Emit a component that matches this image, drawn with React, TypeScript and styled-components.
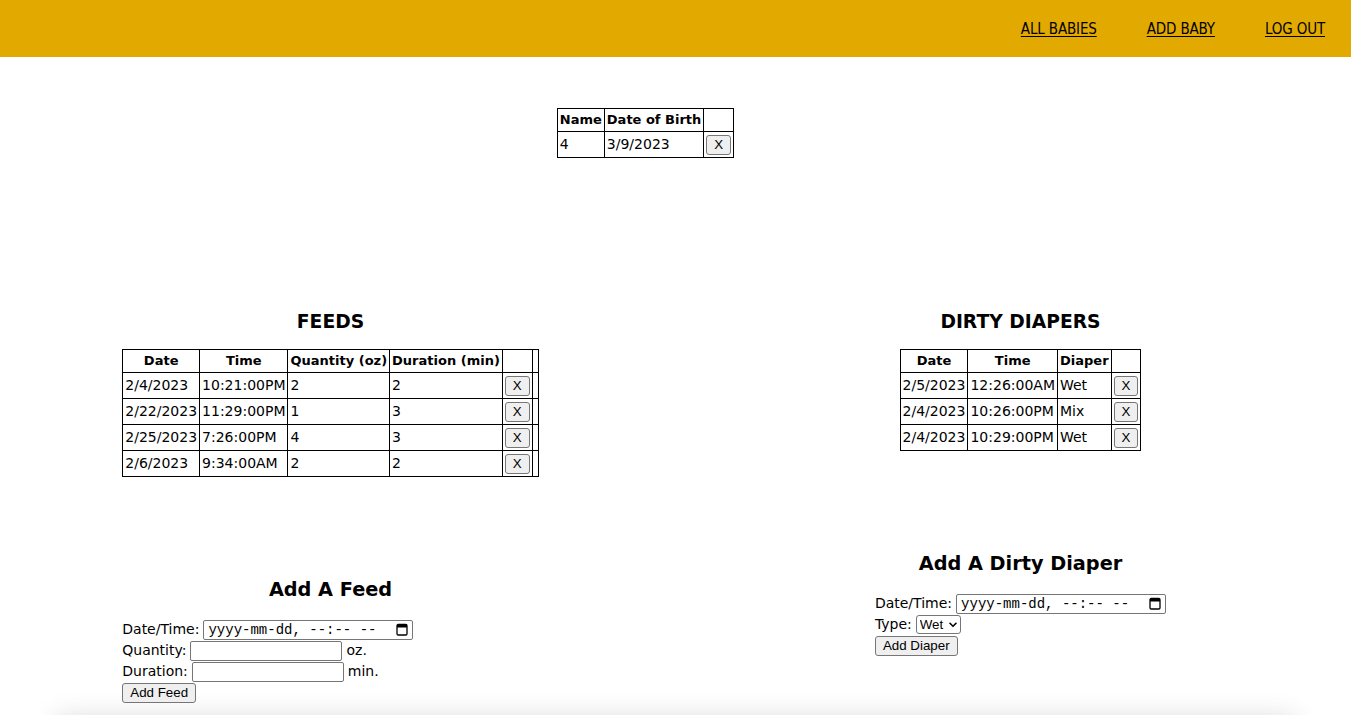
import React from "react";
import styled, { createGlobalStyle } from "styled-components";

const GlobalStyle = createGlobalStyle`
  html, body {
    margin: 0;
    padding: 0;
    overflow: hidden;
    background: #ffffff;
  }
  body {
    font-family: "DejaVu Sans", "Noto Sans", sans-serif;
    color: #000;
  }
`;

const Header = styled.header`
  height: 57px;
  background: #e2a900;
  display: flex;
  justify-content: flex-end;
  align-items: center;
  gap: 50px;
  padding-right: 26px;
`;

const NavLink = styled.a`
  font-family: "Liberation Sans Narrow", "DejaVu Sans Condensed", "Liberation Sans", sans-serif;
  font-size: 15px;
  letter-spacing: -0.15px;
  color: #000;
  text-decoration: underline;
  text-underline-offset: 2px;
  cursor: pointer;
`;

const BabyWrap = styled.div`
  display: flex;
  justify-content: center;
  padding-right: 60px;
  margin-top: 51px;
`;

const Table = styled.table`
  border-collapse: collapse;
  border: 1px solid #000;
  margin: 0 auto;
`;

const Th = styled.th<{ $spacer?: boolean }>`
  border: 1px solid #000;
  padding: 2px;
  width: ${(p) => (p.$spacer ? "1px" : "auto")};
  font: bold 13px/18px "DejaVu Sans", sans-serif;
  text-align: center;
  white-space: nowrap;
`;

const Td = styled.td<{ $spacer?: boolean }>`
  border: 1px solid #000;
  padding: 2px;
  width: ${(p) => (p.$spacer ? "1px" : "auto")};
  font: 14px/17px "DejaVu Sans", sans-serif;
  text-align: left;
  vertical-align: middle;
  white-space: nowrap;
`;

const BodyRow = styled.tr`
  height: 26px;
`;

const Button = styled.button`
  font: 13.33px/18px "Liberation Sans", Arial, sans-serif;
  height: 20px;
  padding: 0 7px;
  margin: 0;
  background: #efefef;
  border: 1px solid #767676;
  border-radius: 3px;
  color: #000;
  display: inline-flex;
  align-items: center;
  justify-content: center;
  box-sizing: border-box;
`;

const Columns = styled.main`
  display: grid;
  grid-template-columns: repeat(2, 690px);
  justify-content: center;
  align-items: start;
  margin-top: 153px;
`;

const Column = styled.section`
  justify-self: center;
  display: flex;
  flex-direction: column;
`;

const SectionTitle = styled.h3`
  font: bold 18.72px/22px "DejaVu Sans", sans-serif;
  text-align: center;
  margin: 0 0 16px;
`;

const FormBlock = styled.form`
  margin-top: 102px;
  display: flex;
  flex-direction: column;
  align-items: flex-start;
`;

const FormTitle = styled.h3`
  align-self: stretch;
  font: bold 19.3px/22px "DejaVu Sans", sans-serif;
  text-align: center;
  margin: 0 0 18px;
`;

const Field = styled.div`
  display: flex;
  align-items: center;
  gap: 4px;
  height: 21px;
  font: 14px/17px "DejaVu Sans", sans-serif;
`;

const DateBox = styled.span`
  display: inline-flex;
  align-items: center;
  justify-content: space-between;
  width: 210px;
  height: 20px;
  box-sizing: border-box;
  border: 1px solid #767676;
  border-radius: 2px;
  padding: 0 4px;
  font: 14px "Liberation Mono", monospace;
  color: #000;
`;

const TextInput = styled.input`
  width: 152px;
  height: 20px;
  box-sizing: border-box;
  border: 1px solid #767676;
  border-radius: 2px;
  padding: 1px 2px;
  margin: 0;
  font: 13.33px "Liberation Sans", Arial, sans-serif;
`;

const SelectBox = styled.span`
  display: inline-flex;
  align-items: center;
  height: 19px;
  box-sizing: border-box;
  border: 1px solid #767676;
  border-radius: 3px;
  padding: 0 3px;
  gap: 1px;
`;

const Select = styled.select`
  appearance: none;
  -webkit-appearance: none;
  border: none;
  background: transparent;
  font: 13.33px "Liberation Sans", Arial, sans-serif;
  padding: 0;
  margin: 0;
  color: #000;
  outline: none;
`;

const Footer = styled.footer`
  width: calc(100% - 110px);
  height: 60px;
  margin: 13px auto 0;
  background: #fff;
  box-shadow: 0 0 26px rgba(0, 0, 0, 0.13);
`;

const CalendarIcon = () => (
  <svg width="12" height="13" viewBox="0 0 12 13" aria-hidden="true">
    <rect x="1" y="1.5" width="10" height="10.5" rx="1.2" fill="none" stroke="#000" strokeWidth="1.3" />
    <rect x="1" y="1.5" width="10" height="3" fill="#000" />
  </svg>
);

const Chevron = () => (
  <svg width="8" height="6" viewBox="0 0 8 6" aria-hidden="true">
    <path d="M1 1.3 L4 4.3 L7 1.3" fill="none" stroke="#000" strokeWidth="1.6" strokeLinecap="round" strokeLinejoin="round" />
  </svg>
);

const feeds = [
  ["2/4/2023", "10:21:00PM", "2", "2"],
  ["2/22/2023", "11:29:00PM", "1", "3"],
  ["2/25/2023", "7:26:00PM", "4", "3"],
  ["2/6/2023", "9:34:00AM", "2", "2"],
];

const diapers = [
  ["2/5/2023", "12:26:00AM", "Wet"],
  ["2/4/2023", "10:26:00PM", "Mix"],
  ["2/4/2023", "10:29:00PM", "Wet"],
];

export default function App() {
  return (
    <>
      <GlobalStyle />
      <Header>
        <NavLink>ALL BABIES</NavLink>
        <NavLink>ADD BABY</NavLink>
        <NavLink>LOG OUT</NavLink>
      </Header>

      <BabyWrap>
        <Table>
          <thead>
            <tr>
              <Th>Name</Th>
              <Th>Date of Birth</Th>
              <Th />
            </tr>
          </thead>
          <tbody>
            <BodyRow>
              <Td>4</Td>
              <Td>3/9/2023</Td>
              <Td>
                <Button type="button">X</Button>
              </Td>
            </BodyRow>
          </tbody>
        </Table>
      </BabyWrap>

      <Columns>
        <Column>
          <SectionTitle>FEEDS</SectionTitle>
          <Table>
            <thead>
              <tr>
                <Th>Date</Th>
                <Th>Time</Th>
                <Th>Quantity (oz)</Th>
                <Th>Duration (min)</Th>
                <Th />
                <Th $spacer />
              </tr>
            </thead>
            <tbody>
              {feeds.map((f, i) => (
                <BodyRow key={i}>
                  <Td>{f[0]}</Td>
                  <Td>{f[1]}</Td>
                  <Td>{f[2]}</Td>
                  <Td>{f[3]}</Td>
                  <Td>
                    <Button type="button">X</Button>
                  </Td>
                  <Td $spacer />
                </BodyRow>
              ))}
            </tbody>
          </Table>

          <FormBlock onSubmit={(e) => e.preventDefault()}>
            <FormTitle>Add A Feed</FormTitle>
            <Field>
              <span>Date/Time:</span>
              <DateBox>
                <span>yyyy-mm-dd, --:-- --</span>
                <CalendarIcon />
              </DateBox>
            </Field>
            <Field>
              <span>Quantity:</span>
              <TextInput type="text" />
              <span>oz.</span>
            </Field>
            <Field>
              <span>Duration:</span>
              <TextInput type="text" />
              <span>min.</span>
            </Field>
            <Field>
              <Button type="submit">Add Feed</Button>
            </Field>
          </FormBlock>
        </Column>

        <Column>
          <SectionTitle>DIRTY DIAPERS</SectionTitle>
          <Table>
            <thead>
              <tr>
                <Th>Date</Th>
                <Th>Time</Th>
                <Th>Diaper</Th>
                <Th />
              </tr>
            </thead>
            <tbody>
              {diapers.map((d, i) => (
                <BodyRow key={i}>
                  <Td>{d[0]}</Td>
                  <Td>{d[1]}</Td>
                  <Td>{d[2]}</Td>
                  <Td>
                    <Button type="button">X</Button>
                  </Td>
                </BodyRow>
              ))}
            </tbody>
          </Table>

          <FormBlock onSubmit={(e) => e.preventDefault()}>
            <FormTitle>Add A Dirty Diaper</FormTitle>
            <Field>
              <span>Date/Time:</span>
              <DateBox>
                <span>yyyy-mm-dd, --:-- --</span>
                <CalendarIcon />
              </DateBox>
            </Field>
            <Field>
              <span>Type:</span>
              <SelectBox>
                <Select defaultValue="Wet">
                  <option>Wet</option>
                  <option>Dirty</option>
                  <option>Mix</option>
                </Select>
                <Chevron />
              </SelectBox>
            </Field>
            <Field>
              <Button type="submit">Add Diaper</Button>
            </Field>
          </FormBlock>
        </Column>
      </Columns>
      <Footer />
    </>
  );
}
